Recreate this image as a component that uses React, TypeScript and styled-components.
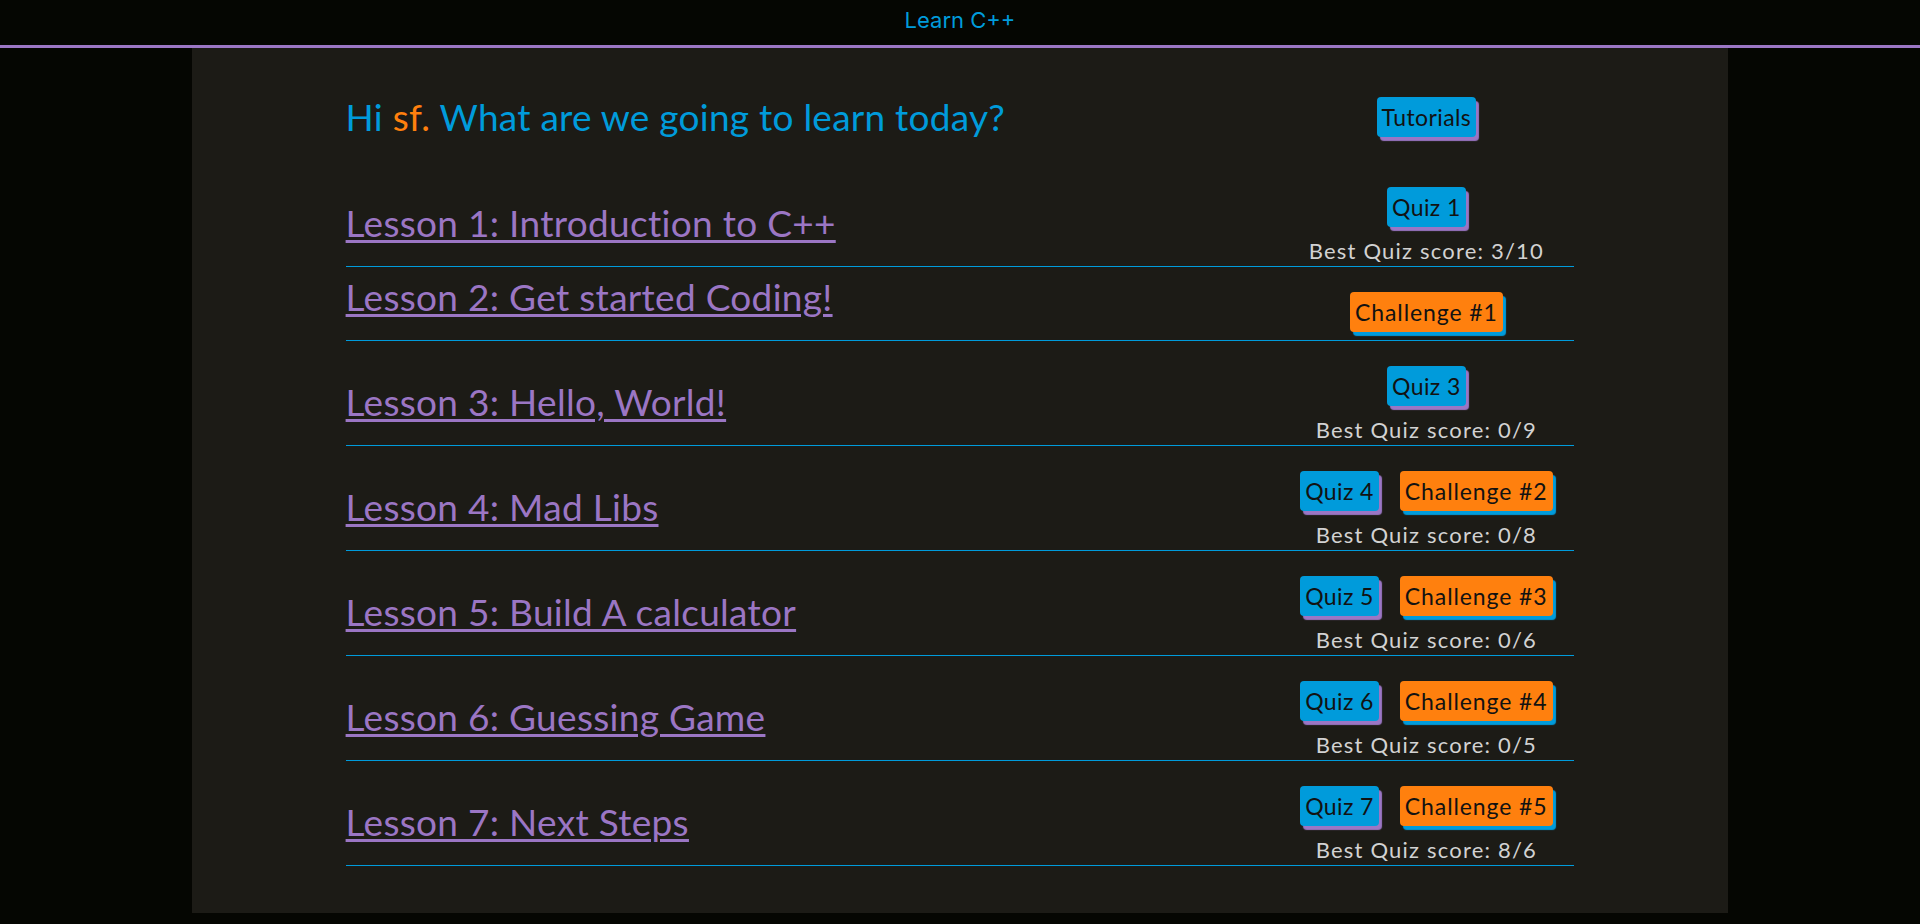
import React from "react";
import styled, { createGlobalStyle } from "styled-components";

const GlobalStyle = createGlobalStyle`
  html, body {
    margin: 0;
    padding: 0;
    background: #050602;
  }
  body {
    font-family: Lato, "Liberation Sans", sans-serif;
  }
  * { box-sizing: border-box; }
`;

const BLUE = "#009bdb";
const ORANGE = "#ff800e";
const PURPLE = "#9b76c4";

const TopBar = styled.header`
  height: 48px;
  background: #050602;
  border-bottom: 3px solid ${PURPLE};
  display: flex;
  justify-content: center;
  align-items: flex-start;
  padding-top: 5px;
`;

const Brand = styled.a`
  font-family: Inter, "Liberation Sans", sans-serif;
  font-size: 22px;
  line-height: 30px;
  color: ${BLUE};
  text-decoration: none;
`;

const Panel = styled.main`
  width: 80%;
  margin: 0 auto;
  background: #1c1b16;
  padding-bottom: 47px;
`;

const Content = styled.div`
  width: 80%;
  margin: 0 auto;
`;

const Grid = styled.div`
  display: grid;
  grid-template-columns: 1fr 296px;
`;

const HeadRow = styled(Grid)`
  align-items: center;
  padding: 47px 0 24px;
`;

const Greeting = styled.h1`
  margin: 0;
  font-size: 37px;
  line-height: 43px;
  font-weight: 400;
  letter-spacing: 0.25px;
  color: ${BLUE};
`;

const Name = styled.span`
  color: ${ORANGE};
`;

const LessonRow = styled(Grid)`
  border-bottom: 1px solid ${BLUE};
`;

const LessonTitle = styled.h2`
  align-self: end;
  margin: 8px 0 22px;
  font-size: 37px;
  line-height: 43px;
  font-weight: 400;
  letter-spacing: 0.3px;
`;

const LessonLink = styled.a`
  color: ${PURPLE};
  text-decoration: underline;
  text-decoration-thickness: 2.5px;
  text-underline-offset: 3px;
  cursor: pointer;
`;

const Side = styled.div`
  align-self: start;
  display: flex;
  flex-direction: column;
  align-items: center;
  padding: 25px 0 2px;
`;

const HeadSide = styled.div`
  display: flex;
  justify-content: center;
`;

const Buttons = styled.div`
  display: flex;
  justify-content: center;
  gap: 21px;
`;

const Btn = styled.button<{ $kind: "quiz" | "challenge" }>`
  font-family: Lato, "Liberation Sans", sans-serif;
  font-size: 23px;
  line-height: 26px;
  letter-spacing: ${(p) => (p.$kind === "quiz" ? "0.4px" : "0.9px")};
  padding: 7px 5px;
  border: none;
  border-radius: 4px;
  color: #121212;
  background: ${(p) => (p.$kind === "quiz" ? BLUE : ORANGE)};
  box-shadow: 3px 4px 1px ${(p) => (p.$kind === "quiz" ? PURPLE : BLUE)};
  cursor: pointer;
`;

const Score = styled.div`
  margin-top: 11px;
  font-size: 22px;
  line-height: 26px;
  letter-spacing: 1.2px;
  color: #d2d2d2;
`;

type Lesson = {
  title: string;
  quiz?: string;
  challenge?: string;
  score?: string;
};

const lessons: Lesson[] = [
  { title: "Lesson 1: Introduction to C++", quiz: "Quiz 1", score: "3/10" },
  { title: "Lesson 2: Get started Coding!", challenge: "Challenge #1" },
  { title: "Lesson 3: Hello, World!", quiz: "Quiz 3", score: "0/9" },
  { title: "Lesson 4: Mad Libs", quiz: "Quiz 4", challenge: "Challenge #2", score: "0/8" },
  { title: "Lesson 5: Build A calculator", quiz: "Quiz 5", challenge: "Challenge #3", score: "0/6" },
  { title: "Lesson 6: Guessing Game", quiz: "Quiz 6", challenge: "Challenge #4", score: "0/5" },
  { title: "Lesson 7: Next Steps", quiz: "Quiz 7", challenge: "Challenge #5", score: "8/6" },
];

export default function App() {
  return (
    <>
      <GlobalStyle />
      <TopBar>
        <Brand>Learn C++</Brand>
      </TopBar>
      <Panel>
        <Content>
          <HeadRow>
            <Greeting>
              Hi <Name>sf.</Name> What are we going to learn today?
            </Greeting>
            <HeadSide>
              <Btn $kind="quiz">Tutorials</Btn>
            </HeadSide>
          </HeadRow>
          {lessons.map((l) => (
            <LessonRow key={l.title}>
              <LessonTitle>
                <LessonLink>{l.title}</LessonLink>
              </LessonTitle>
              <Side>
                <Buttons>
                  {l.quiz && <Btn $kind="quiz">{l.quiz}</Btn>}
                  {l.challenge && <Btn $kind="challenge">{l.challenge}</Btn>}
                </Buttons>
                {l.score && <Score>Best Quiz score: {l.score}</Score>}
              </Side>
            </LessonRow>
          ))}
        </Content>
      </Panel>
    </>
  );
}
